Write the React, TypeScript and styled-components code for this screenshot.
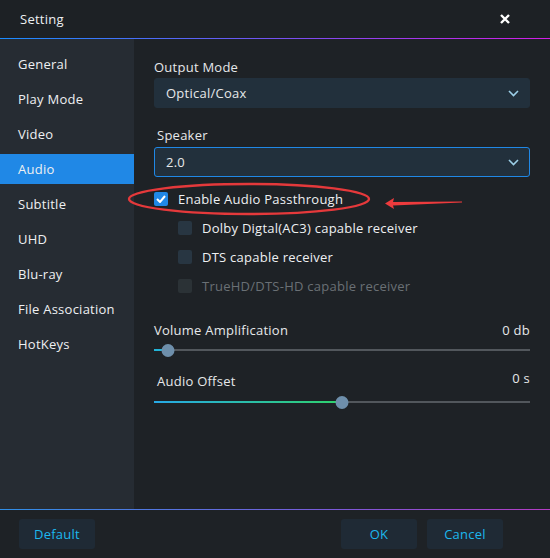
import styled, { createGlobalStyle } from "styled-components";

const GlobalStyle = createGlobalStyle`
  html, body {
    margin: 0;
    padding: 0;
    background: #1e2226;
  }
  * {
    box-sizing: border-box;
  }
`;

const Window = styled.div`
  width: 550px;
  height: 558px;
  display: flex;
  flex-direction: column;
  background: #1e2226;
  color: #e6e8ea;
  font-family: "Open Sans", "DejaVu Sans", sans-serif;
  font-size: 13px;
  letter-spacing: 0.25px;
  overflow: hidden;
`;

const TitleBar = styled.div`
  height: 38px;
  display: flex;
  align-items: center;
  justify-content: space-between;
  padding: 0 20px 0 20px;
  background: #1d2125;
`;

const Title = styled.span`
  font-size: 13px;
  color: #eef0f2;
`;

const CloseButton = styled.button`
  border: none;
  background: none;
  padding: 0;
  width: 14px;
  height: 14px;
  display: flex;
  align-items: center;
  justify-content: center;
  cursor: pointer;
  margin-right: 18px;
`;

const GradientLine = styled.div<{ $soft?: boolean }>`
  height: 1px;
  flex-shrink: 0;
  background: ${(p) =>
    p.$soft
      ? "linear-gradient(90deg, #2f8fe6, #7a5ad8 60%, #b43cc4)"
      : "linear-gradient(90deg, #1a8cff, #7d4cf0 55%, #d21ee6)"};
`;

const Body = styled.div`
  flex: 1;
  display: flex;
  min-height: 0;
`;

const Sidebar = styled.nav`
  width: 134px;
  background: #262c33;
  display: flex;
  flex-direction: column;
  gap: 5px;
  padding-top: 10px;
`;

const NavItem = styled.div<{ $active?: boolean }>`
  height: 30px;
  display: flex;
  align-items: center;
  padding-left: 18px;
  color: #eef0f2;
  background: ${(p) => (p.$active ? "#2088e6" : "transparent")};
  cursor: pointer;
`;

const Content = styled.div`
  flex: 1;
  padding: 19px 20px 0 20px;
  display: flex;
  flex-direction: column;
`;

const Label = styled.div<{ $indent?: number; $top?: number }>`
  line-height: 18px;
  padding-left: ${(p) => p.$indent ?? 0}px;
  margin-top: ${(p) => p.$top ?? 0}px;
`;

const Select = styled.div<{ $focused?: boolean; $top?: number }>`
  height: 30px;
  margin-top: ${(p) => p.$top ?? 0}px;
  display: flex;
  align-items: center;
  justify-content: space-between;
  padding: 0 10px 0 11px;
  background: #22303c;
  border-radius: 3px;
  border: 1px solid ${(p) => (p.$focused ? "#2088e6" : "#22303c")};
`;

const CheckRow = styled.label<{ $indent?: boolean; $disabled?: boolean; $top: number }>`
  position: relative;
  height: 20px;
  margin-top: ${(p) => p.$top}px;
  display: flex;
  align-items: center;
  gap: 10px;
  padding-left: ${(p) => (p.$indent ? 24 : 0)}px;
  color: ${(p) => (p.$disabled ? "#6a7075" : "#eef0f2")};
`;

const Box = styled.span<{ $checked?: boolean; $disabled?: boolean }>`
  width: 14px;
  height: 14px;
  border-radius: 2px;
  display: flex;
  align-items: center;
  justify-content: center;
  background: ${(p) =>
    p.$checked ? "#2088e6" : p.$disabled ? "#2b3236" : "#283642"};
`;

const Annotation = styled.svg`
  position: absolute;
  left: -26px;
  top: -8px;
  overflow: visible;
  pointer-events: none;
`;

const ValueRow = styled.div<{ $top: number }>`
  margin-top: ${(p) => p.$top}px;
  display: flex;
  justify-content: space-between;
  align-items: center;
  height: 18px;
`;

const Value = styled.span<{ $shift?: number }>`
  position: relative;
  top: ${(p) => p.$shift ?? 0}px;
`;

const Slider = styled.div<{ $top: number }>`
  position: relative;
  height: 14px;
  margin-top: ${(p) => p.$top}px;
  display: flex;
  align-items: center;
`;

const Track = styled.div`
  width: 100%;
  height: 2px;
  background: #52575c;
`;

const Fill = styled.div<{ $gradient?: boolean }>`
  position: absolute;
  left: 0;
  height: 2px;
  background: ${(p) =>
    p.$gradient ? "linear-gradient(90deg, #27a9e6, #2fd36b)" : "#22b4d8"};
`;

const Thumb = styled.div`
  position: absolute;
  width: 13px;
  height: 13px;
  border-radius: 50%;
  background: #6e8fab;
  transform: translateX(-50%);
`;

const Footer = styled.div`
  height: 48px;
  display: flex;
  align-items: center;
  padding: 0 47px 0 19px;
  gap: 10px;
`;

const Button = styled.button<{ $push?: boolean }>`
  width: 76px;
  height: 30px;
  border: none;
  border-radius: 3px;
  background: #1f2a35;
  color: #1cb8ee;
  font-family: inherit;
  font-size: 13px;
  letter-spacing: 0.25px;
  margin-left: ${(p) => (p.$push ? "auto" : "0")};
  cursor: pointer;
`;

const Chevron = () => (
  <svg width="11" height="7" viewBox="0 0 11 7">
    <polyline points="1,1 5.5,5.5 10,1" fill="none" stroke="#9ccfe8" strokeWidth="1.6" />
  </svg>
);

const Check = () => (
  <svg width="10" height="8" viewBox="0 0 10 8">
    <polyline points="1,4 4,7 9,1" fill="none" stroke="#ffffff" strokeWidth="2" />
  </svg>
);

const navItems = [
  "General",
  "Play Mode",
  "Video",
  "Audio",
  "Subtitle",
  "UHD",
  "Blu-ray",
  "File Association",
  "HotKeys",
];

export default function App() {
  const volume = 14;
  const offset = 188;
  return (
    <Window>
      <GlobalStyle />
      <TitleBar>
        <Title>Setting</Title>
        <CloseButton>
          <svg width="10" height="10" viewBox="0 0 10 10">
            <path d="M1 1 L9 9 M9 1 L1 9" stroke="#ffffff" strokeWidth="2.4" />
          </svg>
        </CloseButton>
      </TitleBar>
      <GradientLine />
      <Body>
        <Sidebar>
          {navItems.map((n) => (
            <NavItem key={n} $active={n === "Audio"}>
              {n}
            </NavItem>
          ))}
        </Sidebar>
        <Content>
          <Label>Output Mode</Label>
          <Select $top={2}>
            <span>Optical/Coax</span>
            <Chevron />
          </Select>
          <Label $indent={3} $top={18}>
            Speaker
          </Label>
          <Select $focused $top={3}>
            <span>2.0</span>
            <Chevron />
          </Select>
          <CheckRow $top={12}>
            <Box $checked>
              <Check />
            </Box>
            Enable Audio Passthrough
            <Annotation width="340" height="36">
              <ellipse cx="121" cy="18" rx="120" ry="15" fill="none" stroke="#e5393b" strokeWidth="2.4" />
              <path d="M257 22.5 L266 17 L265 21 L334 20.5 L334 21.5 L265 24.5 L266 28 Z" fill="#ee3b3d" />
            </Annotation>
          </CheckRow>
          <CheckRow $indent $top={9}>
            <Box />
            Dolby Digtal(AC3) capable receiver
          </CheckRow>
          <CheckRow $indent $top={9}>
            <Box />
            DTS capable receiver
          </CheckRow>
          <CheckRow $indent $disabled $top={9}>
            <Box $disabled />
            TrueHD/DTS-HD capable receiver
          </CheckRow>
          <ValueRow $top={25}>
            <span>Volume Amplification</span>
            <Value>0 db</Value>
          </ValueRow>
          <Slider $top={4}>
            <Track />
            <Fill style={{ width: volume }} />
            <Thumb style={{ left: volume }} />
          </Slider>
          <ValueRow $top={15}>
            <Label $indent={3}>Audio Offset</Label>
            <Value $shift={-3}>0 s</Value>
          </ValueRow>
          <Slider $top={5}>
            <Track />
            <Fill $gradient style={{ width: offset }} />
            <Thumb style={{ left: offset }} />
          </Slider>
        </Content>
      </Body>
      <GradientLine $soft />
      <Footer>
        <Button>Default</Button>
        <Button $push>OK</Button>
        <Button>Cancel</Button>
      </Footer>
    </Window>
  );
}
